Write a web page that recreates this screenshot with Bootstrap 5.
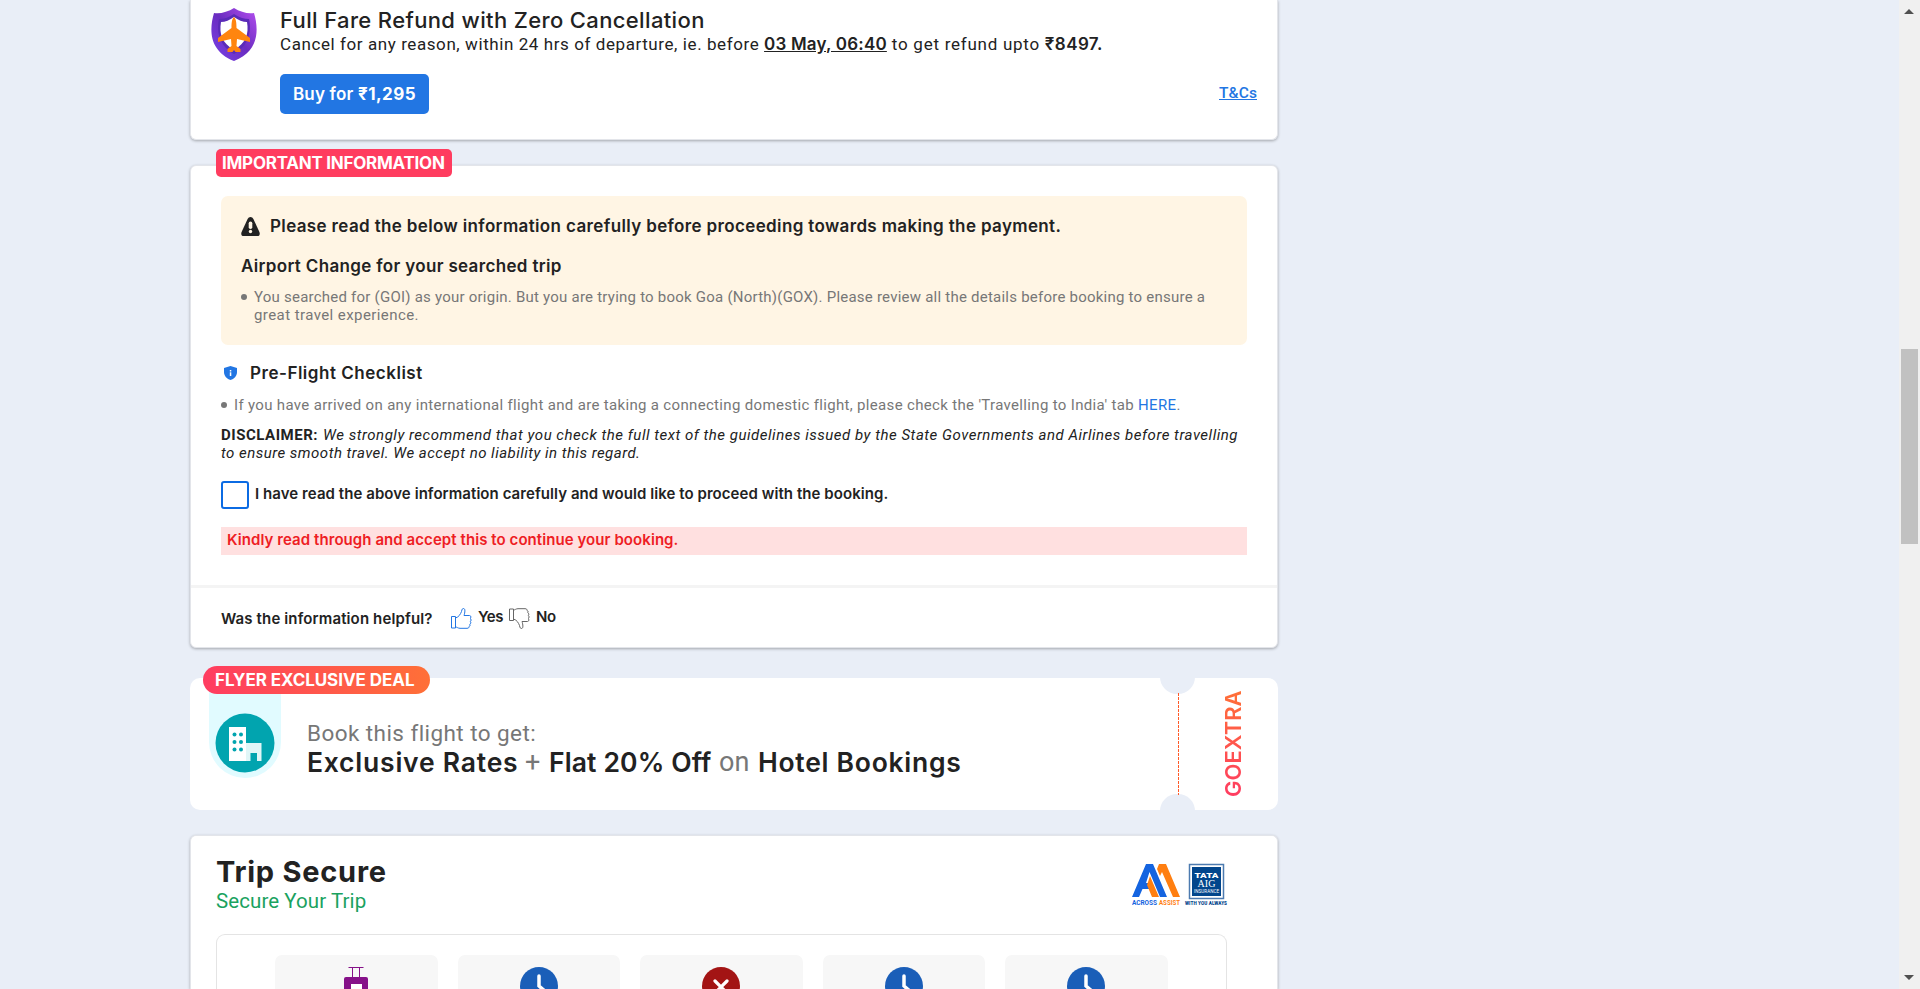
<!DOCTYPE html>
<html lang="en"><head><meta charset="utf-8"><title>Trip review</title>
<link href="https://cdn.jsdelivr.net/npm/bootstrap@5.3.0/dist/css/bootstrap.min.css" rel="stylesheet">
<style>
body{font-family:Roboto,"Open Sans",sans-serif;background:#e9eef7;color:#222;height:989px;overflow:hidden;font-size:15px;line-height:18px}
.main-col{width:1088px;margin-left:190px}
.sheet{background:#fff;border:1px solid #e3e5ea;border-radius:6px;box-shadow:0 1px 3px rgba(0,0,0,.3)}
.sheet-top{height:140px;border-top:0;border-radius:0 0 6px 6px;padding:6px 20px 0}
.nw{white-space:pre}
.in{font-family:Inter,Roboto,sans-serif;font-weight:600;white-space:pre}
.t17{font-size:17px;line-height:24px}
.grey{color:#777}
.lnk{color:#2276e3}
.shield{margin-top:2px;flex:none}
.offer{margin-left:23px}
.title{font-size:22px;line-height:28px;height:27px}
.title .in{font-weight:500;letter-spacing:.36px}
.sub{font-size:17px;line-height:22px;height:23px;letter-spacing:.58px}
.sub .date{letter-spacing:.2px}
.sub .upto{letter-spacing:.74px}
.sub .amt{letter-spacing:.43px}
.buy-row{margin-top:18px}
.btn-buy{background:#2276e3;color:#fff;border:0;border-radius:5px;width:149px;height:40px;padding:0;font-size:17px;line-height:40px;letter-spacing:.2px}
.btn-buy b{font-weight:700;letter-spacing:.45px}
.tnc{font-size:15.5px;line-height:38px;font-weight:500;letter-spacing:.13px}
.tag-imp{position:absolute;left:25px;top:-17px;width:236px;height:28px;border-radius:5px;background:#ff3c5f;color:#fff;font-size:17px;line-height:28px;padding-left:6px;letter-spacing:-.25px}
.tag-imp .in,.pill .in{font-weight:700}
.info{margin-top:25px;height:483px}
.warn{background:#fff5e4;border-radius:7px;height:149px;margin:30px 30px 0;padding:18px 20px 0}
.warn-head{margin-left:10px;letter-spacing:.36px}
.warn-sub{margin-top:16px;letter-spacing:.34px}
.dot-list{display:flex;gap:7px;color:#777;margin-top:10px;white-space:pre;letter-spacing:.23px}
.dot-list::before{content:"";width:6px;height:6px;border-radius:50%;background:#777;margin-top:6px;flex:none}
.dot-list .l2{letter-spacing:.42px}
.dot-list.pre{margin-top:11px;letter-spacing:.33px}
.below{margin:16px 30px 0}
.pre-icon{margin:0 13px 0 3px}
.pre-head{letter-spacing:.52px}
.discl{margin-top:12px;letter-spacing:.52px;white-space:pre}
.discl i{margin-left:5px}
.discl i+br+i{margin-left:0;letter-spacing:.48px}
.agree{margin-top:19px;line-height:26px;gap:6px;letter-spacing:.065px}
.chk{width:28px;height:28px;border:2px solid #0b6be3;border-radius:3px}
.alert-line{background:#ffe0e0;color:#ee1d24;height:28px;line-height:26px;padding-left:6px;margin-top:18px;letter-spacing:.07px}
.divide{height:3px;background:#f4f4f4;margin-top:30px}
.helpful{margin-left:30px;line-height:58px;letter-spacing:-.45px}
.helpful .q{line-height:61px;width:212px;letter-spacing:.13px}
.thumb-up{margin:20px 6px 0 18px}
.thumb-dn{margin:20px 6px 0 6px}
.promo{position:relative;margin-top:30px;height:132px;background:#fff;border-radius:10px}
.pill{position:absolute;left:13px;top:-12px;width:227px;height:28px;border-radius:14px;background:linear-gradient(90deg,#ff3c61,#ff7037);color:#fff;font-size:17px;line-height:28px;padding-left:12px;letter-spacing:-.05px;z-index:1}
.drop{width:72px;height:100px;margin-left:19px;background:#e1fbff;border-radius:0 0 36px 36px;padding:35px 6px 0}
.deal{padding:41px 0 0 26px;white-space:pre}
.deal-a{font-size:22.5px;line-height:28px;letter-spacing:.43px}
.deal-b{font-size:27px;line-height:31px}
.deal-b .in{font-size:26.5px;color:#222}
.deal-b .x1{letter-spacing:.78px;width:210px}
.deal-b .x2{letter-spacing:.13px;width:162px}
.deal-b .x3{letter-spacing:.72px}
.deal-b .plus{margin:0 8px;width:16px}
.deal-b .on{margin:0 8px;width:31px}
.notch{position:absolute;left:970px;width:35px;height:17px;background:#e9eef7}
.notch.up{top:-1px;border-radius:0 0 18px 18px}
.notch.dn{bottom:-1px;border-radius:18px 18px 0 0}
.tear{position:absolute;left:988px;top:15px;bottom:15px;width:1px;background:repeating-linear-gradient(#ff5a28 0 3px,#fff 3px 4px)}
.code{position:absolute;left:1029px;top:12px;height:107px;writing-mode:vertical-rl;transform:rotate(180deg);font-size:22px;line-height:28px;background:linear-gradient(0deg,#ff7037,#ff3c61);-webkit-background-clip:text;background-clip:text;color:transparent}
.trip{margin-top:25px;height:154px;padding:19px 26px 0 25px;border-bottom:0;border-radius:6px 6px 0 0;overflow:hidden}
.trip-h{font-size:29px;line-height:34px;letter-spacing:.75px}
.trip-h .in{font-weight:700}
.trip-s{font-size:20.5px;line-height:25px;height:26px;color:#1aa260;letter-spacing:.08px}
.logos{margin:8px 22px 0 0}
.cover{border:1px solid #e4e4e4;border-bottom:0;border-radius:9px 9px 0 0;height:55px;width:1011px;margin-top:19px;padding:20px 0 0 58px;gap:20px}
.tile{width:162.5px;height:34px;border-radius:7px 7px 0 0;background:#f7f7f7;padding-top:12px;overflow:hidden;line-height:0}
.sbar{position:absolute;right:0;top:0;width:21px;height:989px;background:#f0f0f0}
.thumb{position:absolute;left:2px;top:349px;width:17px;height:195px;background:#c1c1c1}
</style></head><body class="position-relative">
<main class="main-col">
<section class="sheet sheet-top d-flex">
<svg class="shield" width="46" height="54" viewBox="0 0 46 54"><defs><linearGradient id="g" x1="0" y1="1" x2="1" y2="0"><stop offset="0" stop-color="#7a44e8"/><stop offset=".5" stop-color="#6a2cc0"/><stop offset="1" stop-color="#b650f0"/></linearGradient></defs><path d="M23 0C29 4 37 6 43 5C48 22 48 43 23 53C-2 43-2 22 3 5C9 6 17 4 23 0Z" fill="url(#g)"/><path d="M23 6C27 9 33 11 38 11C41 25 37 38 23 46C9 38 5 25 8 11C13 11 19 9 23 6Z" fill="#5a2bb8"/><path d="M23 9C27 12 32 14 36 14C38 26 35 35 23 42C11 35 8 26 10 14C14 14 19 12 23 9Z" fill="#fff"/><path d="M23 9c2 2 2.500 5 2.500 11L39 30v4l-13-3-.5 7 4 3v3h-5l-1.500-2-1.500 2h-5v-3l4-3-.5-7-13 3v-4l13.500-10C20.500 14 21 11 23 9Z" fill="#ff850f"/></svg>
<div class="flex-grow-1 offer">
<div class="title"><span class="in">Full Fare Refund with Zero Cancellation</span></div>
<div class="sub nw">Cancel for any reason, within 24 hrs of departure, ie. before <b class="in date text-decoration-underline">03 May, 06:40</b><span class="upto"> to get refund upto </span><b class="in amt">₹8497.</b></div>
<div class="d-flex justify-content-between buy-row"><button class="btn-buy nw in">Buy for <b>₹1,295</b></button>
<a class="lnk tnc" href="#">T&amp;Cs</a></div>
</div></section>
<section class="sheet info position-relative">
<div class="tag-imp"><b class="in">IMPORTANT INFORMATION</b></div>
<div class="warn">
<div class="t17 d-flex align-items-center"><svg width="19" height="19" viewBox="0 0 19 19"><path d="M9.500 0c1.300 0 2.200.7 2.900 2l6 13c.8 2 .2 4-2 4H2.600c-2.200 0-2.800-2-2-4l6-13C7.300.7 8.200 0 9.500 0Z" fill="#222"/><rect x="7.700" y="4.500" width="3.600" height="7.500" rx="1.800" fill="#fff5e4"/><circle cx="9.500" cy="14.500" r="1.700" fill="#fff5e4"/></svg><span class="in warn-head">Please read the below information carefully before proceeding towards making the payment.</span></div>
<div class="t17 warn-sub"><span class="in">Airport Change for your searched trip</span></div>
<div class="dot-list"><div>You searched for (GOI) as your origin. But you are trying to book Goa (North)(GOX). Please review all the details before booking to ensure a<br><span class="l2">great travel experience.</span></div></div>
</div>
<div class="below">
<div class="t17 d-flex align-items-center"><svg class="pre-icon" width="13" height="14" viewBox="0 0 13 14"><path d="M6.500 0 13 2v4c0 4-3 7-6.500 8C3 13 0 10 0 6V2Z" fill="#2276e3"/><rect x="5.800" y="4" width="1.500" height="1.500" fill="#fff"/><rect x="5.800" y="6.300" width="1.500" height="3.700" fill="#fff"/></svg><span class="in pre-head">Pre-Flight Checklist</span></div>
<div class="dot-list pre"><div>If you have arrived on any international flight and are taking a connecting domestic flight, please check the 'Travelling to India' tab <span class="lnk">HERE</span>.</div></div>
<div class="discl"><b>DISCLAIMER:</b><i>We strongly recommend that you check the full text of the guidelines issued by the State Governments and Airlines before travelling</i><br><i>to ensure smooth travel. We accept no liability in this regard.</i></div>
<div class="d-flex agree"><span class="chk"></span><span class="in">I have read the above information carefully and would like to proceed with the booking.</span></div>
<div class="alert-line"><span class="in">Kindly read through and accept this to continue your booking.</span></div>
</div>
<div class="divide"></div>
<div class="d-flex helpful"><span class="in q">Was the information helpful?</span>
<svg class="thumb-up" width="21" height="21" viewBox="0 0 21 21" fill="none" stroke="#2276e3"><path id="th" d="M.5 8.500h4v11.500h-4ZM4.500 10C8 9 9.500 6 10.500 3.500 11 1 11.500.5 12.500.5c2 0 1.500 4 .5 7h5.500c1.500 0 2 2.500.5 3 1.500.5 1.500 2.500.2 3 1 .7.800 2.300-.5 2.800.7.700.5 1.700-.7 2.200.3 1-.5 1.800-2 1.800H9C7 20.300 6 19 4.500 19"/></svg><span class="in">Yes</span>
<svg class="thumb-dn" width="21" height="21" viewBox="0 0 21 21" fill="none" stroke="#666"><use href="#th" transform="matrix(1 0 0 -1 0 21)"/></svg><span class="in">No</span></div>
</section>
<section class="promo d-flex">
<div class="pill"><b class="in">FLYER EXCLUSIVE DEAL</b></div>
<div class="drop"><svg width="60" height="60" viewBox="0 0 60 60"><circle cx="30" cy="30" r="29.500" fill="#01a4af"/><path d="M14 14h17v34H14Z" fill="#fff"/><path d="M31 30h15.500v18H42v-8h-6.500v8H31Z" fill="#e0f6f7"/><g fill="#01a4af"><circle cx="19.500" cy="21.500" r="2"/><circle cx="26" cy="21.500" r="2"/><circle cx="19.500" cy="29" r="2"/><circle cx="26" cy="29" r="2"/><circle cx="19.500" cy="36.500" r="2"/><circle cx="26" cy="36.500" r="2"/></g></svg></div>
<div class="grey deal"><div class="deal-a">Book this flight to get:</div><div class="d-flex deal-b"><span class="in x1">Exclusive Rates</span><span class="plus">+</span><span class="in x2">Flat 20% Off</span><span class="on">on</span><span class="in x3">Hotel Bookings</span></div></div>
<div class="notch up"></div><div class="notch dn"></div><div class="tear"></div><div class="code"><span class="in">GOEXTRA</span></div>
</section>
<section class="sheet trip">
<div class="d-flex"><div><div class="trip-h"><b class="in">Trip Secure</b></div><div class="trip-s">Secure Your Trip</div></div>
<svg class="ms-auto logos" width="97" height="44" viewBox="0 0 97 44"><path d="M0 34 14 1h7l14 33h-7L17.500 9 14 20h3v6h-6.500L7 34Z" fill="#1464e0"/><path d="M15 22 18 13l9 21h-7ZM25 6l2-5h7l14 33h-7L30 9l-2 4Z" fill="#ff7f11"/><text y="42" font-size="6.500" font-weight="700" textLength="25" lengthAdjust="spacingAndGlyphs" fill="#1464e0">ACROSS</text><text x="27" y="42" font-size="6.500" font-weight="700" textLength="21" lengthAdjust="spacingAndGlyphs" fill="#ff7f11">ASSIST</text><rect x="57.500" y="1.500" width="34" height="34" fill="#fff" stroke="#4d7bb0" stroke-width="1.500"/><rect x="60" y="4" width="29" height="29" fill="#02468c"/><g fill="#fff" text-anchor="middle"><text x="74.500" y="14.500" font-size="8" font-weight="900" textLength="24" lengthAdjust="spacingAndGlyphs">TATA</text><text x="74.500" y="24" font-size="10" font-family="Liberation Serif" textLength="18">AIG</text><text x="74.500" y="29.500" font-size="4.500" textLength="25">INSURANCE</text></g><text x="53" y="41.500" font-size="4.600" font-weight="900" textLength="42" fill="#02468c">WITH YOU ALWAYS</text></svg></div>
<div class="cover d-flex">
<div class="tile text-center"><svg width="24" height="34" viewBox="0 0 24 34"><path d="M4.500.5h15M8.500.5v10M15.500.5v10" stroke="#861189" fill="none"/><rect y="10" width="24" height="24" rx="2" fill="#861189"/><rect x="7" y="17" width="11" height="12" fill="#fff"/></svg></div>
<div class="tile text-center"><svg width="38" height="38" viewBox="0 0 38 38"><circle cx="19" cy="19" r="19" fill="#1a5eb8"/><path d="M19 9v10l7 6" stroke="#fff" stroke-width="3.500" stroke-linecap="round" fill="none"/></svg></div>
<div class="tile text-center"><svg width="38" height="38" viewBox="0 0 38 38"><circle cx="19" cy="19" r="19" fill="#a31414"/><path d="m13 14 12 12m0-12L13 26" stroke="#fff" stroke-width="3.200" stroke-linecap="round"/></svg></div>
<div class="tile text-center"><svg width="38" height="38" viewBox="0 0 38 38"><circle cx="19" cy="19" r="19" fill="#1a5eb8"/><path d="M19 9v10l7 6" stroke="#fff" stroke-width="3.500" stroke-linecap="round" fill="none"/></svg></div>
<div class="tile text-center"><svg width="38" height="38" viewBox="0 0 38 38"><circle cx="19" cy="19" r="19" fill="#1a5eb8"/><path d="M19 9v10l7 6" stroke="#fff" stroke-width="3.500" stroke-linecap="round" fill="none"/></svg></div>
</div></section>
</main>
<div class="sbar"><svg class="d-block" width="21" height="989"><path d="M5 14 10 9 15 14ZM5 975h10l-5 5Z" fill="#505050"/></svg><div class="thumb"></div></div>
<script src="https://cdn.jsdelivr.net/npm/bootstrap@5.3.0/dist/js/bootstrap.bundle.min.js"></script>
</body></html>
